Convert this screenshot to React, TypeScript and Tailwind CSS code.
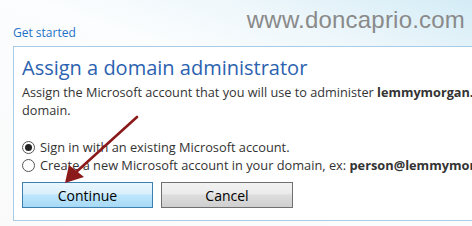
import React from 'react';

const font = { fontFamily: '"Open Sans", "Noto Sans", sans-serif' };

const Radio: React.FC<{ checked?: boolean }> = ({ checked }) => (
  <span className="inline-flex items-center justify-center w-[13px] h-[13px] rounded-full border border-[#555] bg-white shrink-0">
    {checked && <span className="w-[7px] h-[7px] rounded-full bg-[#222]" />}
  </span>
);

export default function App() {
  return (
    <div
      className="relative w-[472px] h-[226px] overflow-hidden bg-[linear-gradient(200deg,#d4ecf6_0%,#eef7fb_22%,#fbfdfe_40%,#fafafa_100%)]"
      style={font}
    >
      {/* watermark */}
      <div
        className="absolute right-[7px] top-[2px] text-[24px] text-[#8a8a8a] tracking-[0.2px]"
        style={{ fontFamily: '"Liberation Sans", Arial, sans-serif' }}
      >
        www.doncaprio.com
      </div>

      <div className="pt-[24px] pl-[13px]">
        <div className="text-[12px] leading-[18px] text-[#1f72c6]">Get started</div>

        {/* panel */}
        <div className="mt-[4px] w-[600px] h-[175px] bg-white border border-[#a9cde9] pl-[8px] pt-[7px]">
          <h1 className="text-[20px] leading-[28px] text-[#2b62b0] whitespace-nowrap">
            Assign a domain administrator
          </h1>
          <p className="mt-[1px] text-[12.7px] leading-[18px] text-[#333] whitespace-nowrap">
            Assign the Microsoft account that you will use to administer{' '}
            <b className="font-bold">lemmymorgan.com</b>
            <br />
            domain.
          </p>

          <div className="mt-[19px] text-[12.8px] leading-[18px] text-[#333]">
            <label className="flex items-center gap-[5px] whitespace-nowrap">
              <Radio checked />
              Sign in with an existing Microsoft account.
            </label>
            <label className="flex items-center gap-[5px] whitespace-nowrap">
              <Radio />
              <span>
                Create a new Microsoft account in your domain, ex:{' '}
                <b className="font-bold">person@lemmymorgan.com</b>
              </span>
            </label>
          </div>

          <div className="mt-[8px] flex gap-[8px]">
            <button className="w-[131px] h-[26px] border border-[#3c7fb1] bg-[linear-gradient(#eaf6fd_0%,#d9f0fc_45%,#bee6fd_50%,#a7d9f5_100%)] text-[14px] text-black">
              Continue
            </button>
            <button className="w-[132px] h-[26px] border border-[#707070] bg-[linear-gradient(#f2f2f2_0%,#ebebeb_45%,#dddddd_50%,#cfcfcf_100%)] text-[14px] text-black">
              Cancel
            </button>
          </div>
        </div>
      </div>

      {/* red arrow */}
      <svg className="absolute left-0 top-0" width="472" height="226" viewBox="0 0 472 226">
        <line x1="137" y1="117" x2="74" y2="174" stroke="#8b1a1a" strokeWidth="2.6" strokeLinecap="round" />
        <polygon points="65,183 69,165 84,177" fill="#8b1a1a" />
      </svg>
    </div>
  );
}
